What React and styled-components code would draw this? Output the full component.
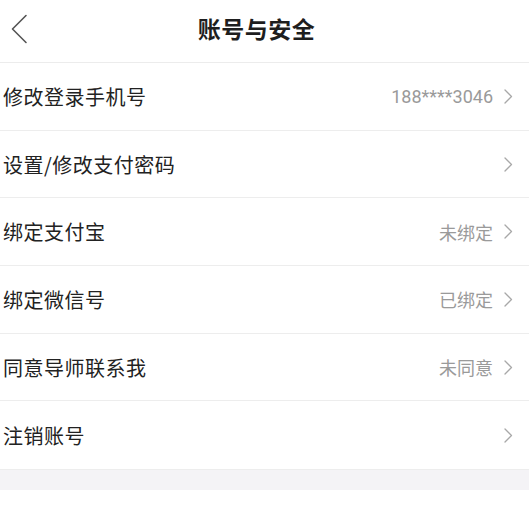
import styled, { createGlobalStyle } from 'styled-components';

const GlobalStyle = createGlobalStyle`
  html, body {
    margin: 0;
    padding: 0;
    background: #ffffff;
  }
  body {
    font-family: "Noto Sans CJK SC", "Noto Sans", sans-serif;
    overflow: hidden;
  }
`;

const items = [
  { label: '修改登录手机号', value: '188****3046' },
  { label: '设置/修改支付密码', value: '' },
  { label: '绑定支付宝', value: '未绑定' },
  { label: '绑定微信号', value: '已绑定' },
  { label: '同意导师联系我', value: '未同意' },
  { label: '注销账号', value: '' },
];

const BackIcon = () => (
  <svg width="18" height="30" viewBox="0 0 18 30" fill="none">
    <path d="M16 1.5 L2.5 15 L16 28.5" stroke="#555" strokeWidth="1.6" strokeLinecap="round" strokeLinejoin="round" />
  </svg>
);

const ArrowIcon = () => (
  <svg width="9" height="15" viewBox="0 0 9 15" fill="none">
    <path d="M1 1 L7.5 7.5 L1 14" stroke="#a8a8a8" strokeWidth="1.3" strokeLinecap="round" strokeLinejoin="round" />
  </svg>
);

const App = () => {
  return (
    <Page>
      <GlobalStyle />
      <Header>
        <BackButton>
          <BackIcon />
        </BackButton>
        <Title>账号与安全</Title>
      </Header>
      <List>
        {items.map((item) => (
          <Row key={item.label}>
            <Label>{item.label}</Label>
            <Extra>
              {item.value && <Value>{item.value}</Value>}
              <ArrowIcon />
            </Extra>
          </Row>
        ))}
      </List>
      <Gap />
      <List>
        <Row>
          <Label>退出登录</Label>
        </Row>
      </List>
    </Page>
  );
};

const Page = styled.div`
  width: 529px;
  height: 510px;
  overflow: hidden;
  background: #ffffff;
`;

const Header = styled.header`
  height: 63px;
  box-sizing: border-box;
  border-bottom: 1px solid #ececec;
  display: flex;
  align-items: center;
  justify-content: center;
  position: relative;
`;

const BackButton = styled.div`
  position: absolute;
  left: 10px;
  top: 14px;
  display: flex;
`;

const Title = styled.h1`
  margin: 0 16px 6px 0;
  font-size: 23px;
  font-weight: 700;
  color: #1e1e1e;
  letter-spacing: 0.5px;
`;

const List = styled.div`
  display: flex;
  flex-direction: column;
`;

const Row = styled.div`
  height: 67.7px;
  box-sizing: border-box;
  border-bottom: 1px solid #ededed;
  display: flex;
  align-items: center;
  justify-content: space-between;
  padding: 0 16px 0 3px;
  &:last-child {
    border-bottom: none;
  }
`;

const Label = styled.span`
  font-size: 20px;
  color: #222222;
  letter-spacing: 0.5px;
`;

const Extra = styled.div`
  display: flex;
  align-items: center;
  gap: 11px;
`;

const Value = styled.span`
  font-family: Roboto, "Noto Sans CJK SC", sans-serif;
  font-size: 18px;
  color: #9a9a9a;
`;

const Gap = styled.div`
  height: 20px;
  background: #f4f3f6;
  border-top: 1px solid #ededed;
`;

export default App;
